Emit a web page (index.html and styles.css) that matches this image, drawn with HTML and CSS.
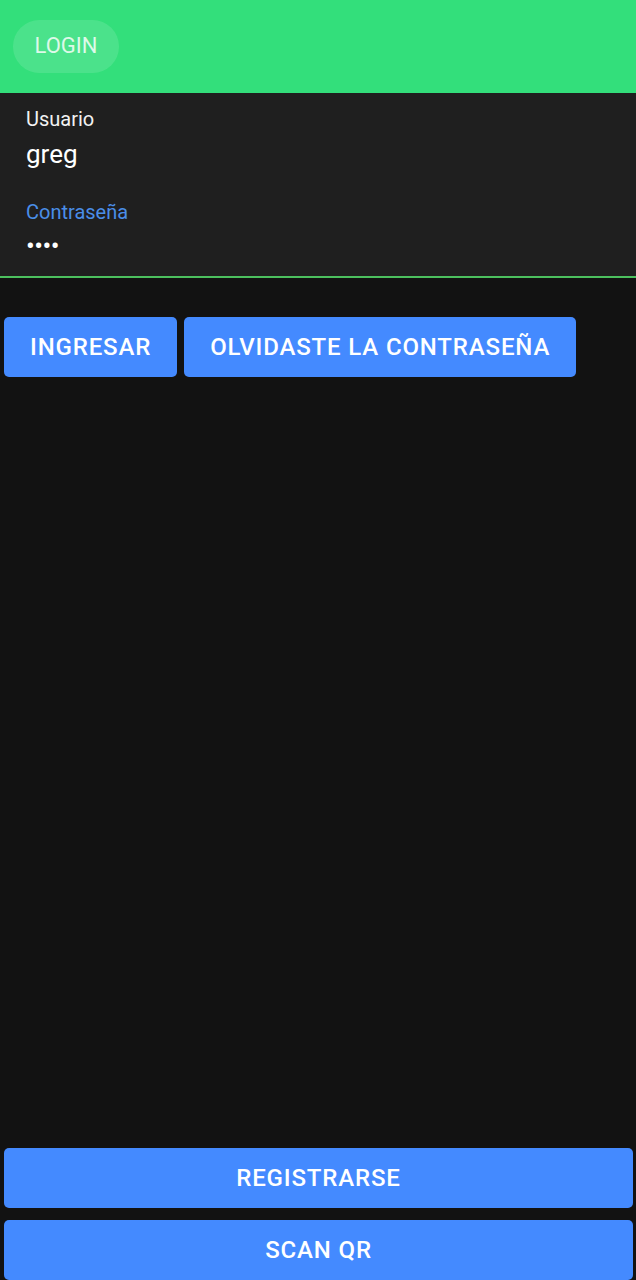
FILE: index.html
```html
<!DOCTYPE html>
<html lang="es">
<head>
<meta charset="utf-8">
<title>Login</title>
<link rel="stylesheet" href="styles.css">
</head>
<body>
<div class="app">
  <header class="topbar">
    <span class="title-pill">LOGIN</span>
  </header>
  <section class="form">
    <div class="field">
      <label class="label">Usuario</label>
      <div class="value">greg</div>
    </div>
    <div class="field">
      <label class="label label-active">Contraseña</label>
      <div class="value dots">••••</div>
    </div>
  </section>
  <div class="underline"></div>
  <div class="actions">
    <button class="btn">INGRESAR</button>
    <button class="btn">OLVIDASTE LA CONTRASEÑA</button>
  </div>
  <div class="bottom">
    <button class="btn btn-wide">REGISTRARSE</button>
    <button class="btn btn-wide">SCAN QR</button>
  </div>
</div>
</body>
</html>
```
FILE: styles.css
```css
html, body {
  margin: 0;
  padding: 0;
  background: #121212;
  font-family: Roboto, "Noto Sans", sans-serif;
}
.app {
  display: flex;
  flex-direction: column;
  min-height: 1280px;
}
.topbar {
  height: 93px;
  background: #33df7b;
  display: flex;
  align-items: center;
  padding-left: 13px;
  box-sizing: border-box;
}
.title-pill {
  display: inline-flex;
  align-items: center;
  justify-content: center;
  width: 106px;
  height: 53px;
  box-sizing: border-box;
  padding-bottom: 3px;
  border-radius: 27px;
  background: rgba(255, 255, 255, 0.12);
  color: rgba(255, 255, 255, 0.82);
  font-size: 22px;
}
.form {
  background: #1f1f1f;
  height: 183px;
  padding: 14px 26px 0;
  box-sizing: border-box;
}
.field {
  display: flex;
  flex-direction: column;
}
.field + .field {
  margin-top: 30px;
}
.label {
  color: #f2f2f2;
  font-size: 20px;
  line-height: 24px;
}
.label-active {
  color: #4a8ee8;
}
.value {
  color: #ffffff;
  font-size: 26px;
  line-height: 32px;
  margin-top: 7px;
}
.dots {
  font-size: 26px;
  letter-spacing: -0.5px;
  margin-top: 6px;
}
.underline {
  height: 2px;
  background: #4cc05e;
}
.actions {
  display: flex;
  gap: 7px;
  padding: 39px 4px 0;
}
.btn {
  border: none;
  background: #448aff;
  color: #ffffff;
  font-family: Roboto, "Noto Sans", sans-serif;
  font-weight: 500;
  font-size: 24px;
  letter-spacing: 0.85px;
  height: 60px;
  padding: 0 26px;
  border-radius: 5px;
}
.bottom {
  margin-top: auto;
  display: flex;
  flex-direction: column;
  gap: 12px;
  padding: 0 3px 0 4px;
}
.btn-wide {
  width: 100%;
}
```
